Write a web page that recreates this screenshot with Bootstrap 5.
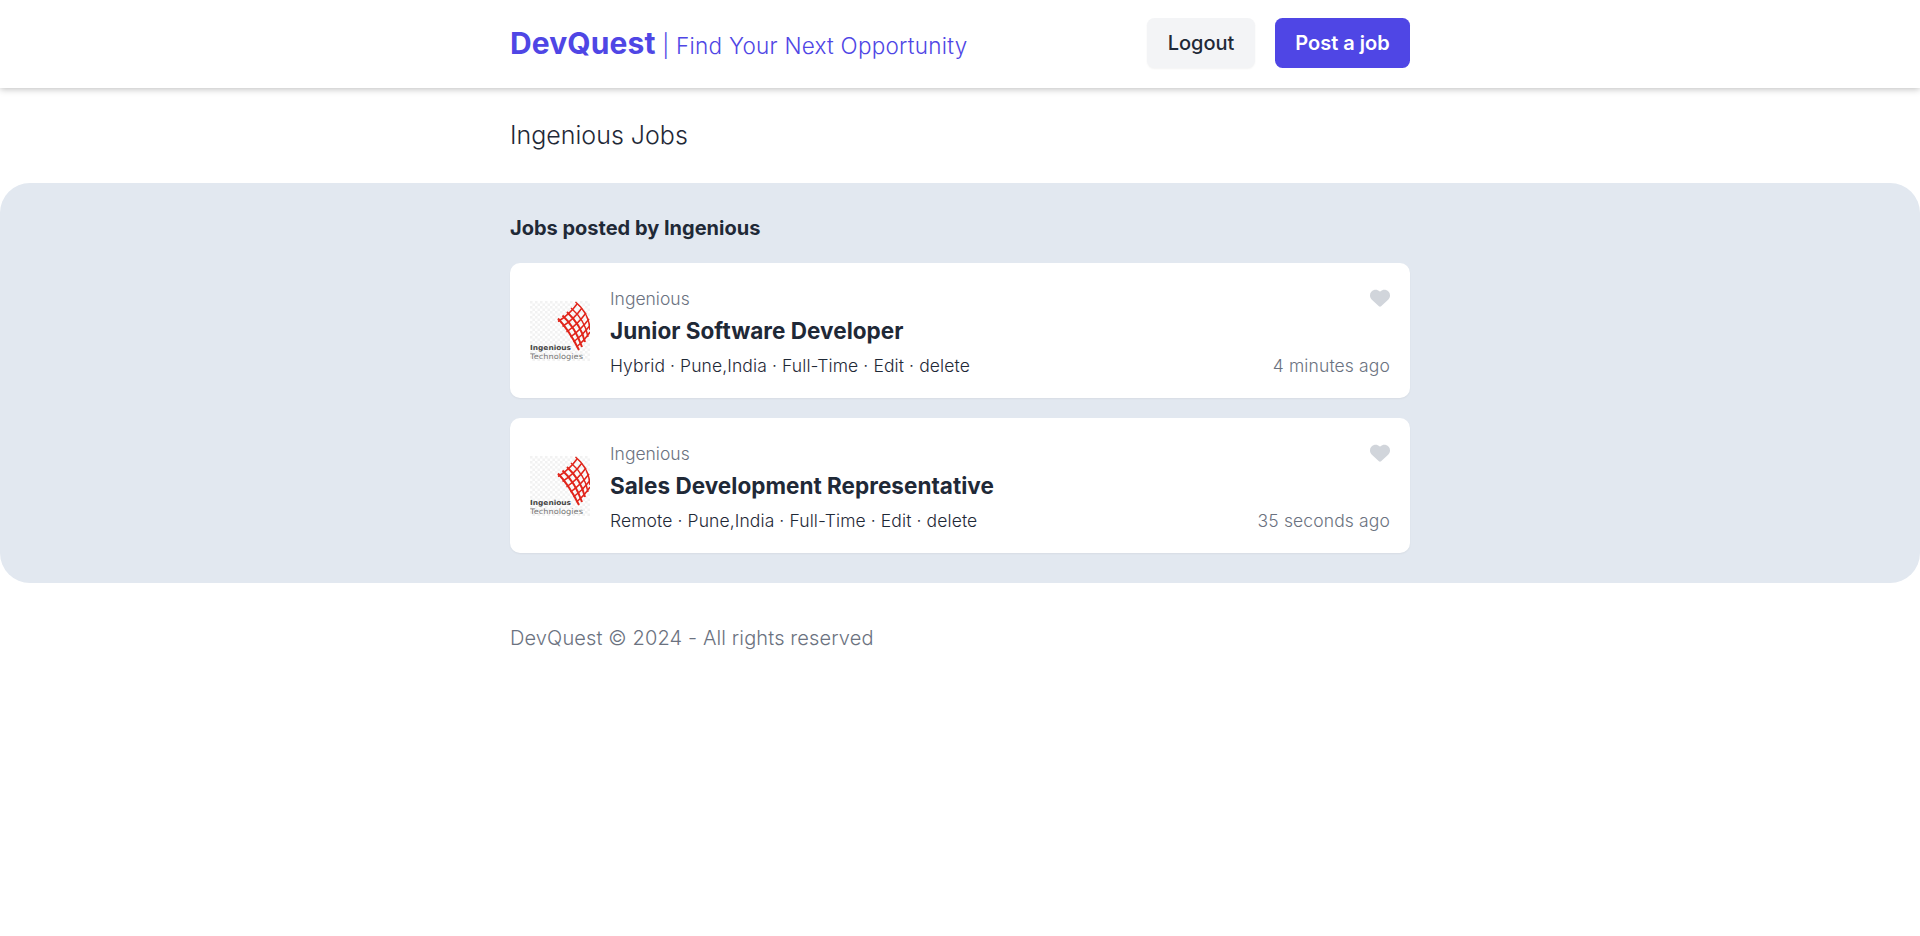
<!DOCTYPE html>
<html lang="en">
<head>
<meta charset="utf-8">
<meta name="viewport" content="width=device-width, initial-scale=1">
<title>DevQuest</title>
<link href="https://cdn.jsdelivr.net/npm/bootstrap@5.3.0/dist/css/bootstrap.min.css" rel="stylesheet">
<style>
  html { font-size: 20px; }
  body { font-family: Inter, sans-serif; font-weight: 300; line-height: 1.5; color: #1f2937; background: #fff; }
  a { text-decoration: none; color: inherit; }
  .page-col { width: 900px; margin-left: auto; margin-right: auto; }
  .site-header { height: 88px; box-shadow: 0 1px 7px rgba(0,0,0,.27); }
  .brand { color: #4f46e5; font-size: 22.5px; line-height: 40px; letter-spacing: .25px; }
  .brand strong { font-size: 30px; font-weight: 700; letter-spacing: .12px; }
  .header-nav { padding-bottom: 2px; }
  .btn-quest { height: 50px; padding: 10px 0; border: 0; border-radius: 7.5px; font-size: 20px; line-height: 30px; }
  .btn-out { width: 108px; background: #f3f4f6; color: #1f2937; font-weight: 500; box-shadow: 0 1px 2px rgba(0,0,0,.05); }
  .btn-post { width: 135px; background: #4f46e5; color: #fff; font-weight: 600; }
  .page-title { font-size: 25px; line-height: 35px; font-weight: 300; padding: 30px 0; margin-bottom: 0; }
  .jobs-band { background: #e2e8f0; border-radius: 30px; height: 400px; padding-top: 30px; }
  .band-title { font-size: 20px; line-height: 30px; font-weight: 700; margin: 0 0 20px; }
  .job-card { height: 135px; padding: 20px; border-radius: 10px; background: #fff; box-shadow: 0 1px 2px rgba(0,0,0,.05); gap: 20px; }
  .job-body { align-self: flex-start; padding-top: 3px; }
  .job-org, .job-meta, .job-time { font-size: 17.5px; line-height: 25px; }
  .job-meta { letter-spacing: .1px; margin-top: 5px; }
  .job-time { letter-spacing: .13px; }
  .job-org, .job-time, .site-foot { color: #6b7280; }
  .job-name { font-size: 22.5px; line-height: 35px; font-weight: 700; margin: 1.5px 0 0; letter-spacing: .03px; }
  .heart { color: #d1d5db; margin-top: 5px; }
  .site-foot { padding: 40px 0; letter-spacing: .13px; }
</style>
</head>
<body>
<svg width="0" height="0" class="position-absolute" aria-hidden="true">
  <defs>
    <pattern id="checks" width="5" height="5" patternUnits="userSpaceOnUse">
      <rect width="5" height="5" fill="#fff"/><path d="M0 0h2.500v2.500H0zM2.500 2.500h2.500v2.500H2.500z" fill="#f2f2f2"/>
    </pattern>
    <symbol id="ingenious" viewBox="0 0 60 60">
      <rect width="60" height="60" fill="url(#checks)"/>
      <g fill="none" stroke="#e1251b">
        <path stroke-width="1.500" d="M28 20.500Q39 14 47 3M32.500 25.500Q44 18 52 7M36.500 31Q48 23 56 12M40.500 36Q51 28.500 59 18M43.500 41Q53 34 60 24.500M46.500 46Q55 39 60 31"/>
        <path stroke-width="2" d="M28 17.500Q39 29 49 49M32.500 14.500Q45 26 52 46M37 11Q51 24 55 41"/>
        <path stroke-width="1.500" d="M41 7Q55 19 58 36M45.500 1Q59 12 60 29"/>
      </g>
      <text x="0" y="49" font-family="DejaVu Sans" font-weight="700" font-size="7" fill="#444" textLength="41" lengthAdjust="spacingAndGlyphs">Ingenious</text>
      <text x="0" y="57.500" font-family="DejaVu Sans" font-weight="400" font-size="7.500" fill="#777" textLength="53" lengthAdjust="spacingAndGlyphs">Technologies</text>
    </symbol>
    <symbol id="heart" viewBox="0 0 512 512">
      <path fill="currentColor" d="M47.600 300.400L228.300 469.100c7.500 7 17.400 10.900 27.700 10.900s20.200-3.900 27.700-10.900L464.400 300.400c30.400-28.300 47.600-68 47.600-109.500v-5.800c0-69.900-50.500-129.500-119.400-141C347 36.500 300.600 51.400 268 84L256 96 244 84c-32.600-32.600-79-47.500-124.600-39.900C50.500 55.600 0 115.200 0 185.100v5.800c0 41.500 17.200 81.200 47.600 109.500z"/>
    </symbol>
  </defs>
</svg>
<header class="site-header">
  <div class="page-col h-100 d-flex align-items-center justify-content-between">
    <a href="#" class="brand"><strong>DevQuest</strong> | Find Your Next Opportunity</a>
    <nav class="header-nav d-flex gap-3">
      <a href="#" class="btn btn-quest btn-out">Logout</a>
      <a href="#" class="btn btn-quest btn-post">Post a job</a>
    </nav>
  </div>
</header>
<main>
  <h1 class="page-col page-title">Ingenious Jobs</h1>
  <section class="jobs-band">
    <div class="page-col">
      <h2 class="band-title">Jobs posted by Ingenious</h2>
      <div class="d-flex flex-column gap-3">
        <article class="job-card d-flex align-items-center">
          <svg width="60" height="60" class="flex-shrink-0"><use href="#ingenious"/></svg>
          <div class="job-body flex-grow-1">
            <div class="job-org">Ingenious</div>
            <h3 class="job-name">Junior Software Developer</h3>
            <div class="job-meta">Hybrid · Pune,India · Full-Time · Edit · delete</div>
          </div>
          <div class="h-100 d-flex flex-column justify-content-between align-items-end">
            <svg width="20" height="20" class="heart"><use href="#heart"/></svg>
            <div class="job-time">4 minutes ago</div>
          </div>
        </article>
        <article class="job-card d-flex align-items-center">
          <svg width="60" height="60" class="flex-shrink-0"><use href="#ingenious"/></svg>
          <div class="job-body flex-grow-1">
            <div class="job-org">Ingenious</div>
            <h3 class="job-name">Sales Development Representative</h3>
            <div class="job-meta">Remote · Pune,India · Full-Time · Edit · delete</div>
          </div>
          <div class="h-100 d-flex flex-column justify-content-between align-items-end">
            <svg width="20" height="20" class="heart"><use href="#heart"/></svg>
            <div class="job-time">35 seconds ago</div>
          </div>
        </article>
      </div>
    </div>
  </section>
</main>
<footer class="page-col site-foot">DevQuest © 2024 - All rights reserved</footer>
<script src="https://cdn.jsdelivr.net/npm/bootstrap@5.3.0/dist/js/bootstrap.bundle.min.js"></script>
</body>
</html>
